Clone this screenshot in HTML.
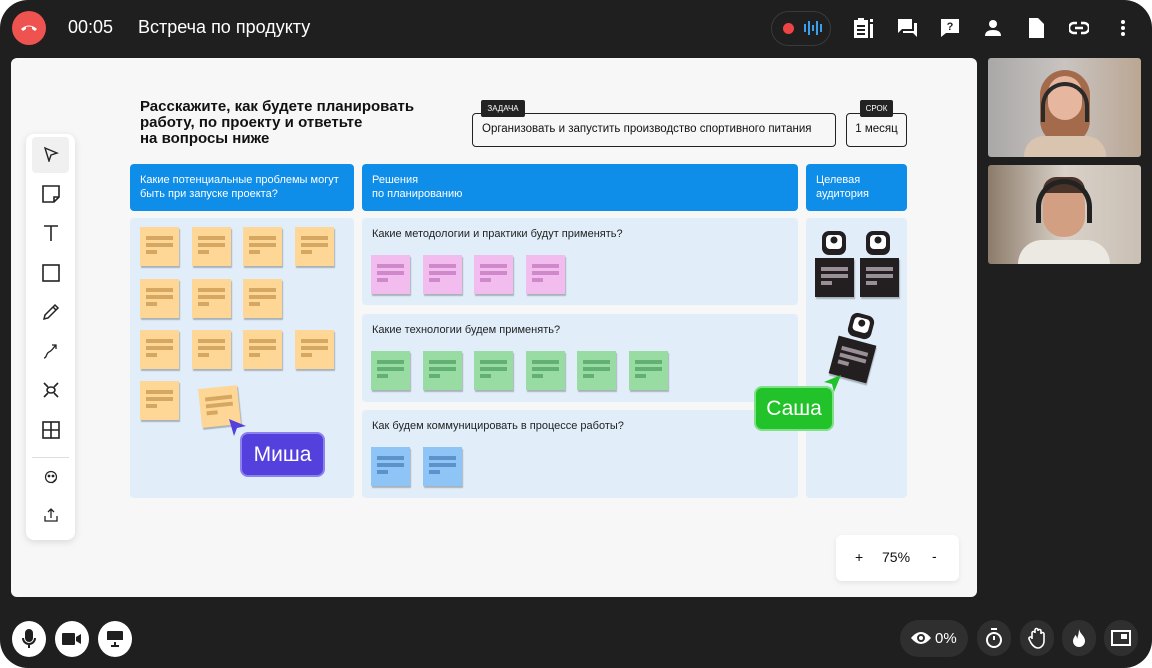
<!DOCTYPE html>
<html><head><meta charset="utf-8"><style>
*{margin:0;padding:0;box-sizing:border-box}
body{width:1152px;height:668px;background:#fff;font-family:"Liberation Sans","Noto Sans CJK SC",sans-serif;position:relative;overflow:hidden}
.frame{position:absolute;left:0;top:0;width:1152px;height:668px;background:#1f1f1f;border-radius:28px}
.a{position:absolute}
.wb{left:11px;top:58px;width:966px;height:539px;background:#f7f7f7;border-radius:6px}
.hdr{background:#0e8de9;color:#fff;font-size:11px;line-height:14px;padding:9px 10px;border-radius:4px}
.lb{background:#e1eef9;border-radius:4px}
.q{font-size:11px;color:#222}
.st{position:absolute;width:39px;height:39px;box-shadow:1px 2px 1px rgba(0,0,0,.25)}
.st i{position:absolute;left:6px;height:4px;display:block}
.y{background:#fed796}.y i{background:#d6a760}
.p{background:#f2bdee}.p i{background:#cf88c9}
.g{background:#98dca4}.g i{background:#62b072}
.b{background:#8fc4f6}.b i{background:#5a92c9}
.d{background:#231f20}.d i{background:#9b8f97}
.circ{position:absolute;width:34px;height:34px;border-radius:50%;background:#fff;display:flex;align-items:center;justify-content:center}
.rb{position:absolute;width:34px;height:36px;border-radius:18px;background:#2f2f2f;display:flex;align-items:center;justify-content:center}
.tool{position:absolute;left:0;width:49px;display:flex;justify-content:center}
</style></head><body>
<div class="frame"></div>
<!-- top bar -->
<div class="a" style="left:12px;top:11px;width:34px;height:34px;border-radius:50%;background:#ef5350"></div>
<svg class="a" style="left:19px;top:20px" width="20" height="16" viewBox="0 0 20 16"><path d="M2 9 Q10 2 18 9 L16 11 L13 9 L13 7 Q10 6 7 7 L7 9 L4 11Z" fill="#fff"/></svg>
<div class="a" style="left:68px;top:17px;color:#fff;font-size:18px">00:05</div>
<div class="a" style="left:138px;top:17px;color:#fff;font-size:18px">Встреча по продукту</div>
<div class="a" style="left:771px;top:11px;width:60px;height:35px;border-radius:18px;border:1px solid #3a3a3a"></div>
<div class="a" style="left:783px;top:23px;width:11px;height:11px;border-radius:50%;background:#ef4444"></div>
<svg class="a" style="left:804px;top:20px" width="18" height="16"><g fill="#3aa0ee"><rect x="0" y="4" width="2" height="8"/><rect x="4" y="1" width="2" height="14"/><rect x="8" y="5" width="2" height="6"/><rect x="12" y="1" width="2" height="14"/><rect x="16" y="4" width="2" height="8"/></g></svg>
<svg class="a" style="left:852px;top:17px" width="22" height="22" viewBox="0 0 22 22" fill="#fff"><path d="M2 3h4V1h6v2h4v18H2z M5 8h8v2H5z M5 12h8v2H5z M5 16h8v2H5z" fill-rule="evenodd"/><rect x="18" y="7" width="3" height="14"/><rect x="18" y="2" width="3" height="3"/></svg>
<svg class="a" style="left:897px;top:18px" width="22" height="20" viewBox="0 0 22 20" fill="#fff"><path d="M1 1h14v10H5l-4 4z"/><path d="M17 5h3v14l-4-4H6v-2h11z"/></svg>
<svg class="a" style="left:940px;top:18px" width="20" height="20" viewBox="0 0 20 20"><path d="M1 1h18v14H6l-5 4z" fill="#fff"/><text x="10" y="12" font-size="11" font-weight="bold" text-anchor="middle" fill="#1f1f1f" font-family="Liberation Sans">?</text></svg>
<svg class="a" style="left:984px;top:19px" width="18" height="18" viewBox="0 0 18 18" fill="#fff"><circle cx="9" cy="5" r="4"/><path d="M1 17q0-6 8-6t8 6z"/></svg>
<svg class="a" style="left:1029px;top:18px" width="15" height="20" viewBox="0 0 15 20" fill="#fff"><path d="M0 0h9l6 6v14H0z"/></svg>
<svg class="a" style="left:1069px;top:21px" width="20" height="14" viewBox="0 0 20 14" fill="none" stroke="#fff" stroke-width="2.4"><path d="M8 2H5a5 5 0 0 0 0 10h3M12 2h3a5 5 0 0 1 0 10h-3M6 7h8"/></svg>
<svg class="a" style="left:1120px;top:19px" width="6" height="18" fill="#fff"><circle cx="3" cy="3" r="2"/><circle cx="3" cy="9" r="2"/><circle cx="3" cy="15" r="2"/></svg>

<!-- whiteboard -->
<div class="a wb"></div>
<div class="a" style="left:140px;top:99px;font-size:15px;font-weight:bold;line-height:16px;color:#111">Расскажите, как будете планировать<br>работу, по проекту и ответьте<br>на вопросы ниже</div>
<div class="a" style="left:472px;top:113px;width:364px;height:34px;border:1px solid #222;border-radius:4px;font-size:11.5px;padding:9px 9px;color:#111">Организовать и запустить производство спортивного питания</div>
<div class="a" style="left:481px;top:100px;width:44px;height:17px;background:#222;border-radius:2px;color:#fff;font-size:8px;text-align:center;line-height:17px">ЗАДАЧА</div>
<div class="a" style="left:846px;top:113px;width:61px;height:34px;border:1px solid #222;border-radius:4px;font-size:11.5px;padding:9px 0;text-align:center;color:#111">1 месяц</div>
<div class="a" style="left:860px;top:100px;width:33px;height:17px;background:#222;border-radius:2px;color:#fff;font-size:8px;text-align:center;line-height:17px">СРОК</div>

<div class="a hdr" style="left:130px;top:164px;width:224px;height:47px">Какие потенциальные проблемы могут<br>быть при запуске проекта?</div>
<div class="a hdr" style="left:362px;top:164px;width:436px;height:47px">Решения<br>по планированию</div>
<div class="a hdr" style="left:806px;top:164px;width:101px;height:47px">Целевая<br>аудитория</div>

<div class="a lb" style="left:130px;top:218px;width:224px;height:280px"></div>
<div class="a lb" style="left:362px;top:218px;width:436px;height:87px"></div>
<div class="a lb" style="left:362px;top:314px;width:436px;height:88px"></div>
<div class="a lb" style="left:362px;top:410px;width:436px;height:88px"></div>
<div class="a lb" style="left:806px;top:218px;width:101px;height:280px"></div>
<div class="a q" style="left:372px;top:228px">Какие методологии и практики будут применять?</div>
<div class="a q" style="left:372px;top:324px">Какие технологии будем применять?</div>
<div class="a q" style="left:372px;top:420px">Как будем коммуницировать в процессе работы?</div>

<div id="st"></div>
<script>
var h='';function s(c,x,y,r){h+='<div class="st '+c+'" style="left:'+x+'px;top:'+y+'px;'+(r?'transform:rotate('+r+'deg)':'')+'"><i style="top:9px;width:27px"></i><i style="top:16px;width:27px"></i><i style="top:23px;width:11px"></i></div>';}
var yx=[140,192,243,295];
[[227,4],[279,3],[330,4],[381,1]].forEach(function(r){for(var i=0;i<r[1];i++)s('y',yx[i],r[0]);});
s('y',200,387,-6);
for(var i=0;i<4;i++)s('p',371+i*51.5,255);
for(var i=0;i<6;i++)s('g',371+i*51.5,351);
for(var i=0;i<2;i++)s('b',371+i*51.5,447);
s('d',815,258);s('d',860,258);s('d',833,340,15);
document.getElementById('st').innerHTML=h;
</script>
<svg class="a" style="left:820px;top:230px" width="80" height="30"><g fill="#231f20"><rect x="2" y="1" width="24" height="24" rx="7"/><rect x="46" y="1" width="24" height="24" rx="7"/></g><g fill="#fff"><rect x="6" y="5" width="16" height="14" rx="4"/><rect x="50" y="5" width="16" height="14" rx="4"/></g><g fill="#231f20"><circle cx="14" cy="10" r="3.5"/><circle cx="58" cy="10" r="3.5"/></g></svg>
<svg class="a" style="left:846px;top:311px" width="30" height="30"><g transform="rotate(15 15 15)"><rect x="3" y="3" width="24" height="24" rx="7" fill="#231f20"/><rect x="7" y="7" width="16" height="14" rx="4" fill="#fff"/><circle cx="15" cy="12" r="3.5" fill="#231f20"/></g></svg>

<!-- cursors -->
<svg class="a" style="left:227px;top:417px" width="20" height="20"><path d="M2 2L19 9L10 11L7 19Z" fill="#5340dd"/></svg>
<div class="a" style="left:240px;top:432px;width:85px;height:45px;background:#5340dd;border:2px solid #8d80ef;border-radius:8px;color:#fff;font-size:21px;text-align:center;line-height:41px">Миша</div>
<svg class="a" style="left:823px;top:373px" width="20" height="20"><path d="M18 2L11 19L9 11L1 9Z" fill="#22c32a"/></svg>
<div class="a" style="left:754px;top:386px;width:80px;height:45px;background:#22c32a;border:2px solid #7fe086;border-radius:8px;color:#fff;font-size:21px;text-align:center;line-height:41px">Саша</div>

<!-- toolbar -->
<div class="a" style="left:26px;top:134px;width:49px;height:406px;background:#fff;border-radius:8px;box-shadow:0 2px 8px rgba(0,0,0,.12)">
<div class="a" style="left:6px;top:3px;width:37px;height:36px;background:#f0f0f0;border-radius:4px"></div>
<svg class="a" style="left:17px;top:12px" width="16" height="16" fill="none" stroke="#222" stroke-width="1.4"><path d="M2 2L14 7L8 9L6 15Z"/></svg>
<svg class="a" style="left:16px;top:51px" width="18" height="18" fill="none" stroke="#222" stroke-width="1.6"><path d="M1 1h16v11l-5 5H1z M12 17v-5h5"/></svg>
<svg class="a" style="left:16px;top:90px" width="18" height="18" fill="none" stroke="#222" stroke-width="1.6"><path d="M2 2h14M9 2v15"/></svg>
<svg class="a" style="left:16px;top:130px" width="18" height="18" fill="none" stroke="#222" stroke-width="1.6"><rect x="1" y="1" width="16" height="16"/></svg>
<svg class="a" style="left:16px;top:169px" width="18" height="18" fill="none" stroke="#222" stroke-width="1.5"><path d="M2 16l1-4L13 2l3 3L6 15z M11 4l3 3"/></svg>
<svg class="a" style="left:16px;top:208px" width="18" height="18" fill="none" stroke="#222" stroke-width="1.3"><path d="M2 16c3 0 2-5 5-6s4-4 7-7M10 3h4v4"/></svg>
<svg class="a" style="left:16px;top:247px" width="18" height="18" fill="none" stroke="#222" stroke-width="1.6"><ellipse cx="9" cy="9" rx="4" ry="3"/><path d="M2 2l4 4M16 2l-4 4M2 16l4-4M16 16l-4-4"/></svg>
<svg class="a" style="left:16px;top:287px" width="18" height="18" fill="none" stroke="#222" stroke-width="1.6"><rect x="1" y="1" width="16" height="16"/><path d="M9 1v16M1 9h16"/></svg>
<div class="a" style="left:6px;top:323px;width:37px;height:1px;background:#ddd"></div>
<svg class="a" style="left:18px;top:336px" width="14" height="14" fill="none" stroke="#222" stroke-width="1.2"><circle cx="7" cy="7" r="5.5"/><circle cx="5" cy="6" r=".8" fill="#222"/><circle cx="9" cy="6" r=".8" fill="#222"/><path d="M8 13l4-4"/></svg>
<svg class="a" style="left:18px;top:374px" width="14" height="14" fill="none" stroke="#222" stroke-width="1.3"><path d="M1 8v5h12V8M7 10V1M4 4l3-3 3 3"/></svg>
</div>

<!-- zoom -->
<div class="a" style="left:836px;top:535px;width:123px;height:46px;background:#fff;border-radius:6px;box-shadow:0 2px 6px rgba(0,0,0,.08);font-size:14px;color:#111">
<span class="a" style="left:19px;top:14px">+</span><span class="a" style="left:46px;top:14px">75%</span><span class="a" style="left:96px;top:13px">-</span></div>

<!-- videos -->
<div class="a" style="left:988px;top:58px;width:153px;height:99px;border-radius:3px;overflow:hidden;background:linear-gradient(90deg,#a9a7a7 0%,#c9c4c1 50%,#bba693 100%)">
<div class="a" style="left:52px;top:12px;width:50px;height:75px;border-radius:25px;background:#a46a4c"></div>
<div class="a" style="left:60px;top:18px;width:34px;height:44px;border-radius:17px;background:#e6b79e"></div>
<div class="a" style="left:36px;top:78px;width:82px;height:30px;border-radius:20px 20px 0 0;background:#d9c4b0"></div>
<div class="a" style="left:53px;top:24px;width:48px;height:40px;border:4px solid #2a2a2a;border-bottom:none;border-radius:24px 24px 0 0"></div>
</div>
<div class="a" style="left:988px;top:165px;width:153px;height:99px;border-radius:3px;overflow:hidden;background:linear-gradient(90deg,#8c7b6a 0%,#d9d2c8 50%,#c9bfb5 100%)">
<div class="a" style="left:55px;top:18px;width:42px;height:54px;border-radius:20px;background:#d39f82"></div>
<div class="a" style="left:55px;top:12px;width:42px;height:16px;border-radius:20px 20px 4px 4px;background:#4a3328"></div>
<div class="a" style="left:30px;top:75px;width:92px;height:30px;border-radius:24px 24px 0 0;background:#ece8e2"></div>
<div class="a" style="left:48px;top:14px;width:56px;height:44px;border:5px solid #222;border-bottom:none;border-radius:28px 28px 0 0"></div>
</div>

<!-- bottom -->
<div class="circ" style="left:12px;top:621px;height:36px"><svg width="14" height="20" viewBox="0 0 14 20" fill="none" stroke="#1f1f1f" stroke-width="2"><rect x="4" y="1" width="6" height="11" rx="3" fill="#1f1f1f"/><path d="M1 9a6 6 0 0 0 12 0M7 15v4"/></svg></div>
<div class="circ" style="left:55px;top:621px;height:36px"><svg width="20" height="14" viewBox="0 0 20 14" fill="#1f1f1f"><rect x="0" y="1" width="13" height="12" rx="1"/><path d="M14 5l5-3v10l-5-3z"/></svg></div>
<div class="circ" style="left:98px;top:621px;height:36px"><svg width="18" height="18" viewBox="0 0 18 18" fill="#1f1f1f"><rect x="1" y="1" width="16" height="11" rx="1"/><rect x="1" y="10" width="16" height="2" fill="#fff"/><rect x="8" y="12" width="2" height="4"/><rect x="5" y="15" width="8" height="2"/></svg></div>
<div class="a" style="left:900px;top:620px;width:68px;height:37px;border-radius:19px;background:#2f2f2f"></div>
<svg class="a" style="left:910px;top:630px" width="22" height="16" viewBox="0 0 22 16"><path d="M1 8Q11 -4 21 8Q11 20 1 8z" fill="#fff"/><circle cx="11" cy="8" r="4" fill="#2f2f2f"/><circle cx="11" cy="8" r="2" fill="#fff"/></svg>
<div class="a" style="left:935px;top:630px;color:#fff;font-size:15px">0%</div>
<div class="rb" style="left:977px;top:620px"><svg width="18" height="20" viewBox="0 0 18 20" fill="none" stroke="#fff" stroke-width="2"><circle cx="9" cy="12" r="7"/><path d="M6 1h6M9 8v4"/></svg></div>
<div class="rb" style="left:1020px;top:620px"><svg width="18" height="22" viewBox="0 0 18 22" fill="none" stroke="#fff" stroke-width="1.6"><path d="M4 12V6a1.5 1.5 0 0 1 3 0V3a1.5 1.5 0 0 1 3 0v1a1.5 1.5 0 0 1 3 0v3a1.5 1.5 0 0 1 3 0v7c0 4-3 7-6 7s-5-2-7-5l-2-4a1.5 1.5 0 0 1 3-1z"/></svg></div>
<div class="rb" style="left:1062px;top:620px"><svg width="14" height="20" viewBox="0 0 14 20" fill="#fff"><path d="M7 1C8 6 13 8 13 13a6 6 0 0 1-12 0c0-3 2-4 2-6 2 1 2 3 2 4 1-3 2-6 2-10z"/></svg></div>
<div class="rb" style="left:1104px;top:620px"><svg width="20" height="16" viewBox="0 0 20 16" fill="none" stroke="#fff" stroke-width="2"><rect x="1" y="1" width="18" height="14"/><rect x="10" y="4" width="6" height="5" fill="#fff" stroke="none"/></svg></div>
</body></html>
